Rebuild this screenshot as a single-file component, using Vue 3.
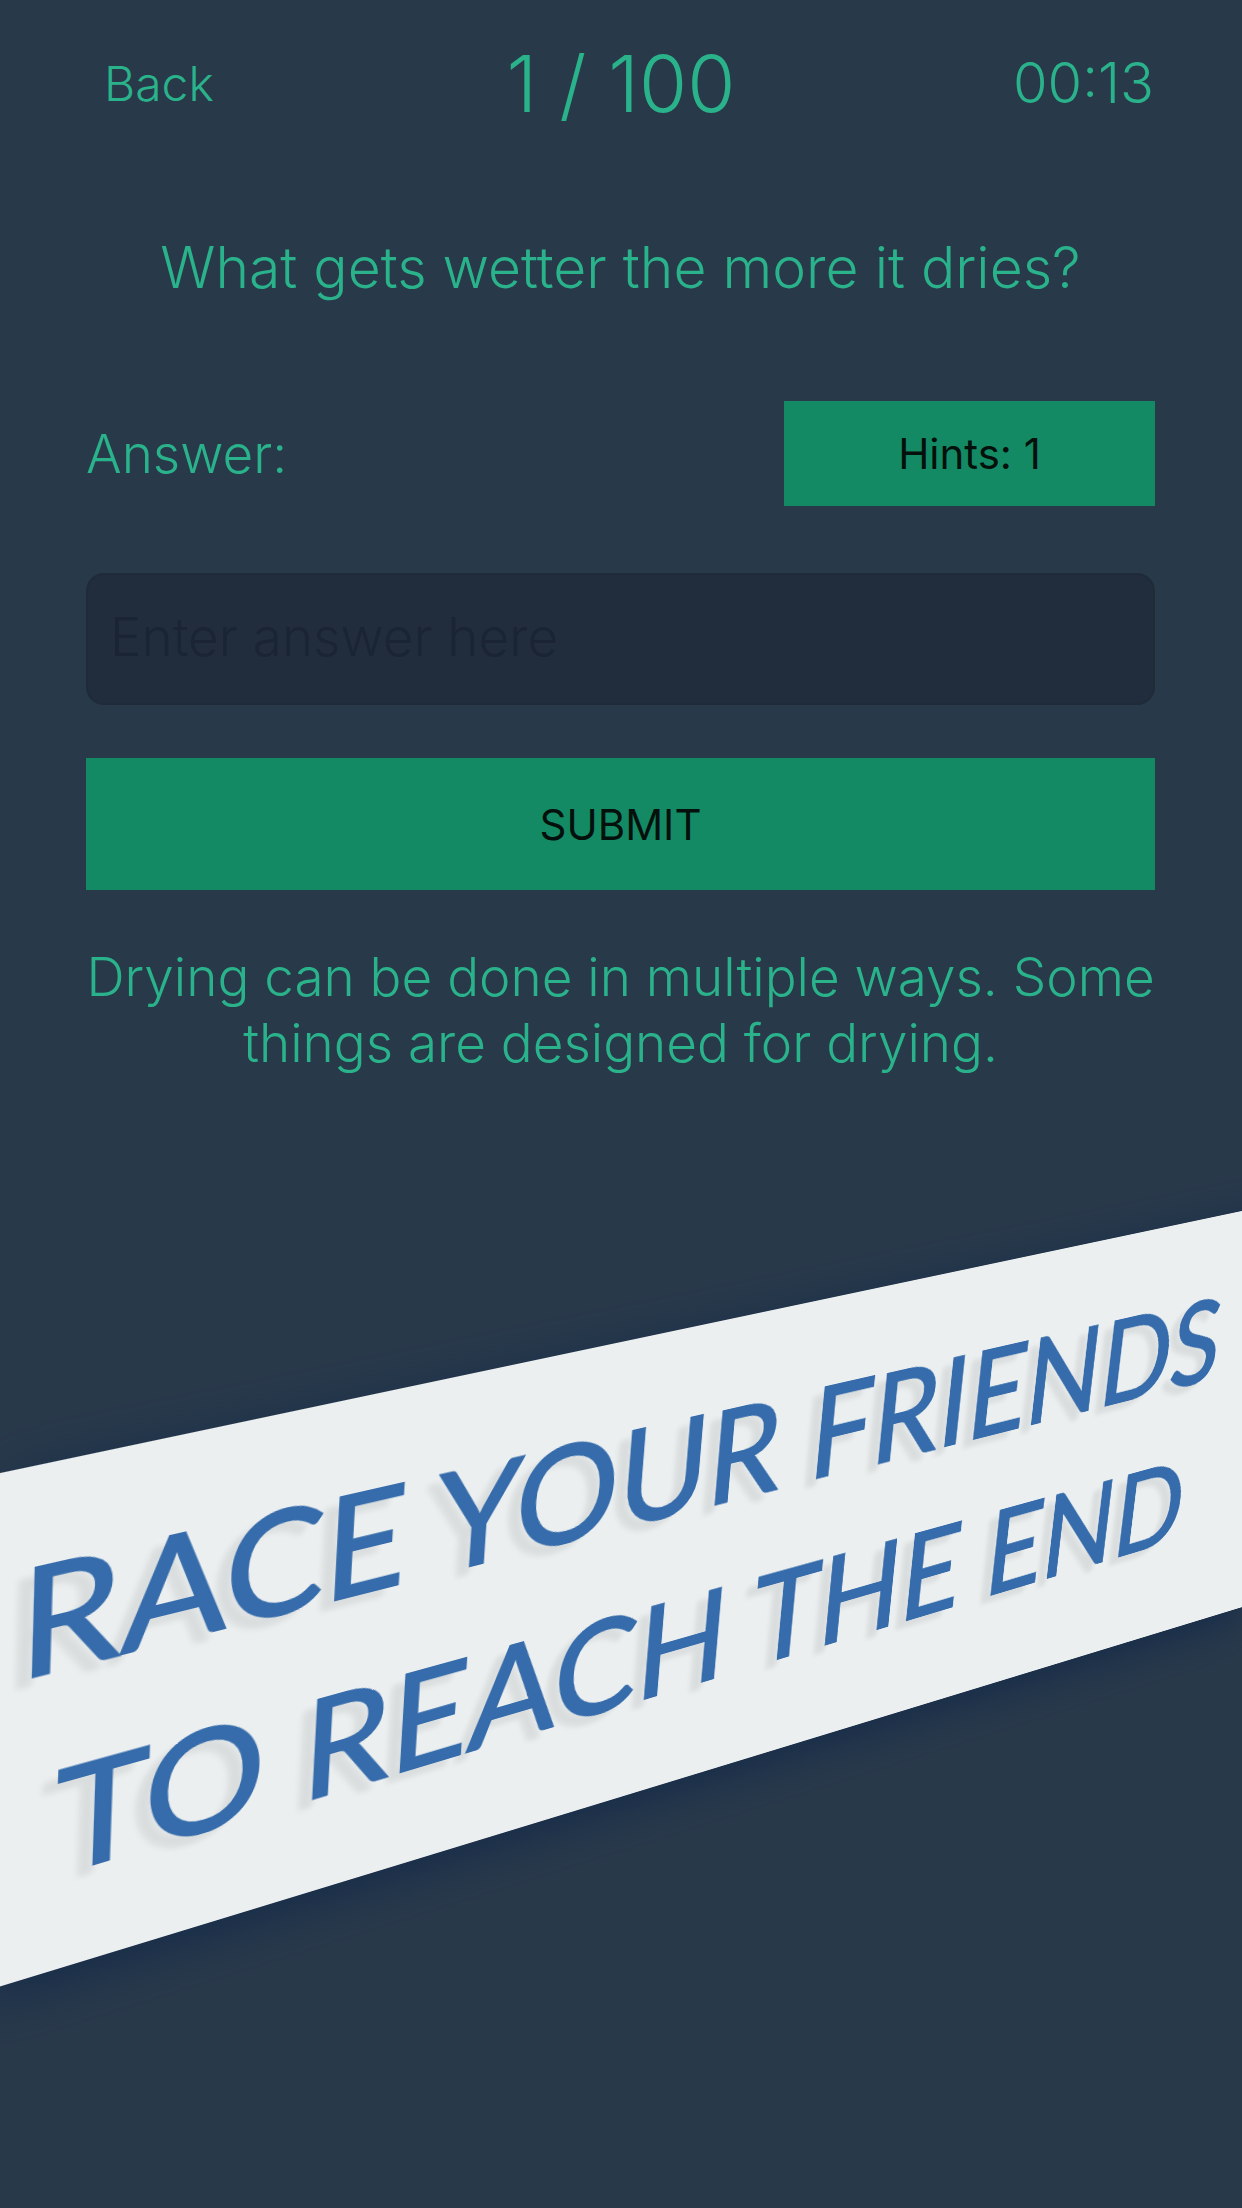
<script setup>
import { computed, onBeforeUnmount, onMounted, ref } from 'vue'

const answer = ref('')
const stage = ref(null)
const stageWidth = ref(1242)

// Flat sizes in pixels, and the projected corners as shares of the stage
// width: top left, top right, bottom right, bottom left.
const RIBBON = {
  width: 1500,
  height: 480,
  corners: [[0, 0.2102], [1.0419, -0.0097], [1, 0.3181], [-0.008, 0.626]],
}
const SLOGAN = {
  width: 1400,
  height: 396,
  corners: [[0.0177, 0.2432], [0.9956, 0.0335], [0.9632, 0.2856], [0.0089, 0.5821]],
}

// Perspective matrix that lays a flat face onto its four corners.
function project({ width, height, corners }, scale) {
  const [p0, p1, p2, p3] = corners.map(([x, y]) => [x * scale, y * scale])
  const dx1 = p1[0] - p2[0]
  const dx2 = p3[0] - p2[0]
  const dx3 = p0[0] - p1[0] + p2[0] - p3[0]
  const dy1 = p1[1] - p2[1]
  const dy2 = p3[1] - p2[1]
  const dy3 = p0[1] - p1[1] + p2[1] - p3[1]
  const det = dx1 * dy2 - dx2 * dy1
  const g = (dx3 * dy2 - dx2 * dy3) / det
  const h = (dx1 * dy3 - dx3 * dy1) / det
  const m = [
    (p1[0] - p0[0] + g * p1[0]) / width, (p1[1] - p0[1] + g * p1[1]) / width, 0, g / width,
    (p3[0] - p0[0] + h * p3[0]) / height, (p3[1] - p0[1] + h * p3[1]) / height, 0, h / height,
    0, 0, 1, 0,
    p0[0], p0[1], 0, 1,
  ]
  return { transform: `matrix3d(${m.map((n) => n.toFixed(9)).join(',')})` }
}

const ribbonStyle = computed(() => project(RIBBON, stageWidth.value))
const sloganStyle = computed(() => project(SLOGAN, stageWidth.value))

let observer
onMounted(() => {
  observer = new ResizeObserver(([entry]) => {
    stageWidth.value = entry.contentRect.width
  })
  observer.observe(stage.value)
  stageWidth.value = stage.value.clientWidth
})
onBeforeUnmount(() => observer?.disconnect())
</script>

<template>
  <main class="page">
    <header class="bar">
      <button type="button" class="back">Back</button>
      <h1 class="progress">1 / 100</h1>
      <time class="timer">00:13</time>
    </header>

    <form class="quiz" @submit.prevent>
      <p class="question">What gets wetter the more it dries?</p>
      <div class="row">
        <label class="label" for="answer">Answer:</label>
        <button type="button" class="action hints">Hints: 1</button>
      </div>
      <input id="answer" v-model="answer" class="field" type="text" placeholder="Enter answer here" />
      <button type="submit" class="action submit">SUBMIT</button>
      <p class="hint">Drying can be done in multiple ways. Some things are designed for drying.</p>
    </form>

    <section ref="stage" class="stage">
      <div class="ribbon" :style="ribbonStyle"></div>
      <div class="slogan" :style="sloganStyle">
        <p>RACE YOUR FRIENDS</p>
        <p class="second">TO REACH THE END</p>
      </div>
    </section>
  </main>
</template>

<style>
body {
  margin: 0;
  background: #28394a;
}
</style>

<style scoped>
.page {
  min-height: 100vh;
  overflow-x: clip;
  background: #28394a;
  color: #2ab28b;
  font-family: Inter, "Open Sans", sans-serif;
  font-weight: 300;
}

p,
h1 {
  margin: 0;
  font-weight: inherit;
}

button {
  border: 0;
  padding: 0;
  font: inherit;
  cursor: pointer;
}

.bar {
  display: grid;
  grid-template-columns: 1fr auto 1fr;
  align-items: center;
  height: 166px;
  padding: 0 88px;
}

.back {
  justify-self: start;
  padding-left: 16px;
  background: none;
  color: inherit;
  font-size: 48px;
}

.progress {
  font-size: 78px;
}

.timer {
  justify-self: end;
  font-size: 56px;
}

.quiz {
  display: flex;
  flex-direction: column;
  padding: 64px 87px 0 86px;
}

.question {
  font-size: 57px;
  line-height: 76px;
  text-align: center;
}

.row {
  display: flex;
  align-items: center;
  justify-content: space-between;
  margin-top: 95px;
}

.label {
  font-size: 53px;
}

.action {
  background: #148a64;
  color: #04100c;
  font-size: 42px;
  font-weight: 400;
}

.hints {
  width: 371px;
  height: 105px;
}

.field {
  box-sizing: border-box;
  height: 132px;
  margin-top: 67px;
  padding: 0 22px 4px;
  border: 2px solid #1f2b38;
  border-radius: 18px;
  background: #212d3d;
  color: #2ab28b;
  font: inherit;
  font-size: 53px;
}

.field::placeholder {
  color: #1a2434;
  opacity: 1;
}

.submit {
  height: 132px;
  margin-top: 53px;
}

.hint {
  margin-top: 54px;
  font-size: 53px;
  line-height: 66px;
  text-align: center;
}

.stage {
  position: relative;
  margin-top: 136px;
  aspect-ratio: 1242 / 990;
}

.ribbon,
.slogan {
  position: absolute;
  top: 0;
  left: 0;
  transform-origin: 0 0;
}

.ribbon {
  width: 1500px;
  height: 480px;
  background: #ebeff0;
  box-shadow: 0 12px 48px rgba(18, 40, 74, 0.8);
}

.slogan {
  width: 1400px;
  height: 396px;
  color: #366cab;
  font-family: Lato, "Open Sans", sans-serif;
  font-size: 141px;
  font-weight: 400;
  line-height: 198px;
  white-space: nowrap;
  text-shadow: -14px 8px 6px rgba(0, 0, 0, 0.08);
  -webkit-text-stroke: 2px #366cab;
}

.second {
  padding-left: 36px;
}
</style>
